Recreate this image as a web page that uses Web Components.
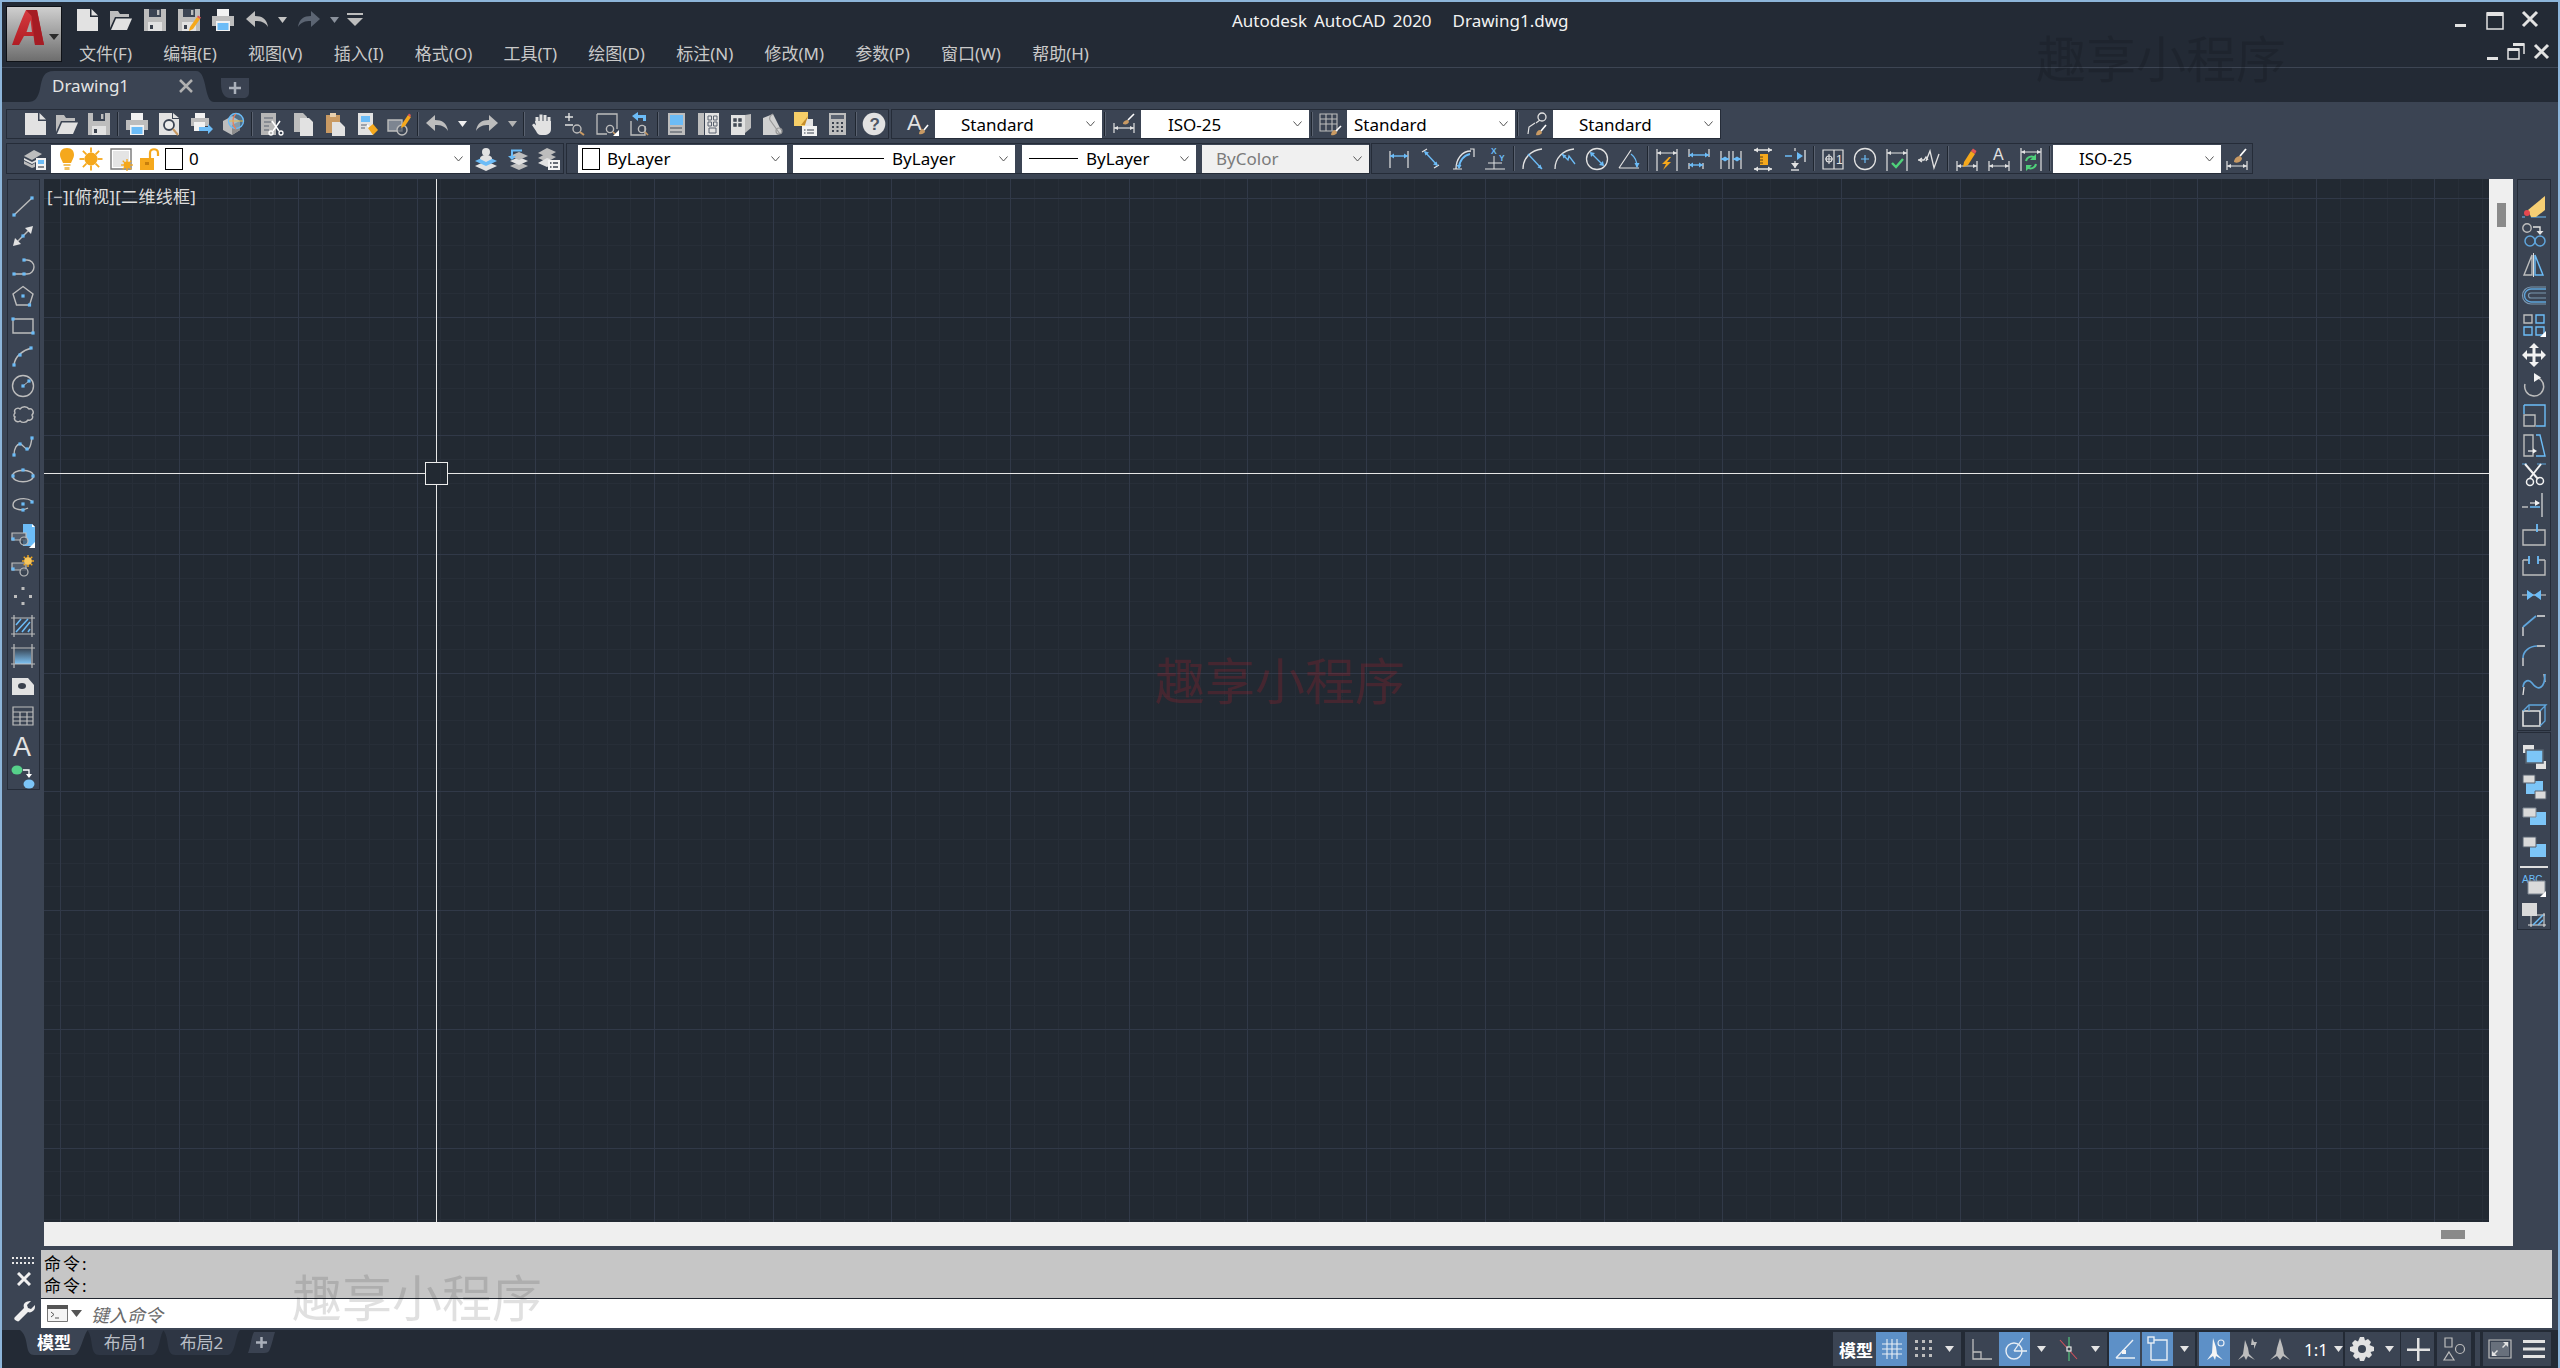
<!DOCTYPE html>
<html lang="zh">
<head>
<meta charset="utf-8">
<title>Autodesk AutoCAD 2020</title>
<style>
  html, body { margin: 0; height: 100%; overflow: hidden; background: #232a35; }
</style>
</head>
<body>
<cad-app>
  <cad-titlebar slot="title">
    <cad-icon slot="qat" name="new" w="34"></cad-icon>
    <cad-icon slot="qat" name="open" w="34"></cad-icon>
    <cad-icon slot="qat" name="save" w="34"></cad-icon>
    <cad-icon slot="qat" name="saveas" w="34"></cad-icon>
    <cad-icon slot="qat" name="print" w="34"></cad-icon>
    <cad-icon slot="qat" name="undo" w="34"></cad-icon>
    <cad-dd slot="qat" w="16" color="#c4c4c4"></cad-dd>
    <cad-icon slot="qat" name="redodim" w="34" style="margin-left:2px"></cad-icon>
    <cad-dd slot="qat" w="16" color="#8a919c"></cad-dd>
    <cad-icon slot="qat" name="custom" w="26"></cad-icon>
    <cad-menu-item slot="menu">文件(F)</cad-menu-item>
    <cad-menu-item slot="menu">编辑(E)</cad-menu-item>
    <cad-menu-item slot="menu">视图(V)</cad-menu-item>
    <cad-menu-item slot="menu">插入(I)</cad-menu-item>
    <cad-menu-item slot="menu">格式(O)</cad-menu-item>
    <cad-menu-item slot="menu">工具(T)</cad-menu-item>
    <cad-menu-item slot="menu">绘图(D)</cad-menu-item>
    <cad-menu-item slot="menu">标注(N)</cad-menu-item>
    <cad-menu-item slot="menu">修改(M)</cad-menu-item>
    <cad-menu-item slot="menu">参数(P)</cad-menu-item>
    <cad-menu-item slot="menu">窗口(W)</cad-menu-item>
    <cad-menu-item slot="menu">帮助(H)</cad-menu-item>
  </cad-titlebar>

  <cad-tabbar slot="tabs"></cad-tabbar>

  <cad-ribbon slot="ribbon">
    <cad-row>
      <cad-group style="width:883px;padding-left:12px">
        <cad-icon name="new"></cad-icon><cad-icon name="open"></cad-icon><cad-icon name="save"></cad-icon>
        <cad-sep></cad-sep>
        <cad-icon name="print"></cad-icon><cad-icon name="preview"></cad-icon><cad-icon name="publish"></cad-icon><cad-icon name="cube"></cad-icon>
        <cad-sep></cad-sep>
        <cad-icon name="cut"></cad-icon><cad-icon name="copydoc"></cad-icon><cad-icon name="paste"></cad-icon><cad-icon name="match"></cad-icon><cad-icon name="blockedit"></cad-icon>
        <cad-sep></cad-sep>
        <cad-icon name="undo"></cad-icon><cad-dd w="18"></cad-dd><cad-icon name="redo"></cad-icon><cad-dd w="18" color="#b4b4b4"></cad-dd>
        <cad-sep></cad-sep>
        <cad-icon name="pan"></cad-icon><cad-icon name="zoomrt"></cad-icon><cad-icon name="zoomwin"></cad-icon><cad-icon name="zoomprev"></cad-icon>
        <cad-sep></cad-sep>
        <cad-icon name="props"></cad-icon><cad-icon name="center"></cad-icon><cad-icon name="palette"></cad-icon><cad-icon name="sheets"></cad-icon><cad-icon name="markup"></cad-icon><cad-icon name="calc"></cad-icon>
        <cad-sep></cad-sep>
        <cad-icon name="help" w="30"></cad-icon>
      </cad-group>
      <cad-group style="width:830px;margin-left:2px;padding-left:7px">
        <cad-icon name="textstyle" w="36"></cad-icon>
        <cad-combo w="167" pad="26">Standard</cad-combo>
        <cad-sep style="margin:0 1px 0 2px"></cad-sep>
        <cad-icon name="dimstyle" w="34"></cad-icon>
        <cad-combo w="168" pad="27">ISO-25</cad-combo>
        <cad-sep></cad-sep>
        <cad-icon name="tablestyle"></cad-icon>
        <cad-combo w="168" pad="7">Standard</cad-combo>
        <cad-sep></cad-sep>
        <cad-icon name="mleaderstyle"></cad-icon>
        <cad-combo w="167" pad="26">Standard</cad-combo>
      </cad-group>
    </cad-row>
    <cad-row>
      <cad-group style="width:558px;padding-left:11px">
        <cad-icon name="layerprops" w="33"></cad-icon>
        <cad-combo w="419" pad="4" tall>
          <cad-icon name="bulb" w="24"></cad-icon>
          <cad-icon name="sun" w="24"></cad-icon>
          <cad-icon name="freezevp" w="34" style="margin-left:1px"></cad-icon>
          <cad-icon name="lock" w="22"></cad-icon>
          <cad-swatch style="margin-left:5px"></cad-swatch>
          <span style="margin-left:6px">0</span>
        </cad-combo>
        <cad-icon name="layercur"></cad-icon><cad-icon name="layerprev" w="31"></cad-icon><cad-icon name="layerstate"></cad-icon>
      </cad-group>
      <cad-group style="width:804px;margin-left:2px;padding-left:11px">
        <cad-combo w="209" pad="7" tall><cad-swatch style="margin-left:-3px;margin-right:7px"></cad-swatch>ByLayer</cad-combo>
        <cad-combo w="222" pad="7" tall style="margin-left:6px"><cad-rule w="84"></cad-rule>ByLayer</cad-combo>
        <cad-combo w="174" pad="7" tall style="margin-left:7px"><cad-rule w="49"></cad-rule>ByLayer</cad-combo>
        <cad-combo w="167" pad="14" tall off style="margin-left:6px">ByColor</cad-combo>
      </cad-group>
      <cad-group style="width:882px;margin-left:1px;padding-left:11px">
        <cad-icon name="dimlinear"></cad-icon><cad-icon name="dimaligned"></cad-icon><cad-icon name="dimarc"></cad-icon><cad-icon name="dimord"></cad-icon>
        <cad-sep></cad-sep>
        <cad-icon name="dimradius"></cad-icon><cad-icon name="dimjog"></cad-icon><cad-icon name="dimdia"></cad-icon><cad-icon name="dimang"></cad-icon>
        <cad-sep></cad-sep>
        <cad-icon name="qdim"></cad-icon><cad-icon name="dimbase"></cad-icon><cad-icon name="dimcont"></cad-icon><cad-icon name="dimspace"></cad-icon><cad-icon name="dimbreak"></cad-icon>
        <cad-sep></cad-sep>
        <cad-icon name="tolerance"></cad-icon><cad-icon name="centermark"></cad-icon><cad-icon name="inspect"></cad-icon><cad-icon name="jogline"></cad-icon>
        <cad-sep></cad-sep>
        <cad-icon name="dimedit"></cad-icon><cad-icon name="dimtedit"></cad-icon><cad-icon name="dimupdate"></cad-icon>
        <cad-sep></cad-sep>
        <cad-combo w="168" pad="26" tall>ISO-25</cad-combo>
        <cad-icon name="dimbrush"></cad-icon>
      </cad-group>
    </cad-row>
  </cad-ribbon>

  <cad-side slot="left" side="left">
    <cad-group vertical style="width:33px;height:611px;padding-top:11px;padding-right:1px">
      <cad-icon h="30" w="30" name="line"></cad-icon><cad-icon h="30" w="30" name="xline"></cad-icon><cad-icon h="30" w="30" name="pline"></cad-icon><cad-icon h="30" w="30" name="polygon"></cad-icon><cad-icon h="30" w="30" name="rect"></cad-icon>
      <cad-icon h="30" w="30" name="arc"></cad-icon><cad-icon h="30" w="30" name="circle"></cad-icon><cad-icon h="30" w="30" name="cloud"></cad-icon><cad-icon h="30" w="30" name="spline"></cad-icon><cad-icon h="30" w="30" name="ellipse"></cad-icon>
      <cad-icon h="30" w="30" name="ellarc"></cad-icon><cad-icon h="30" w="30" name="insert"></cad-icon><cad-icon h="30" w="30" name="mkblock"></cad-icon><cad-icon h="30" w="30" name="point"></cad-icon><cad-icon h="30" w="30" name="hatch"></cad-icon>
      <cad-icon h="30" w="30" name="gradient"></cad-icon><cad-icon h="30" w="30" name="region"></cad-icon><cad-icon h="30" w="30" name="table"></cad-icon><cad-icon h="30" w="30" name="mtext"></cad-icon><cad-icon h="30" w="30" name="addsel"></cad-icon>
    </cad-group>
  </cad-side>

  <cad-viewport slot="view">[−][俯视][二维线框]</cad-viewport>

  <cad-side slot="right" side="right">
    <cad-group vertical style="width:34px;height:552px;padding-top:10px">
      <cad-icon h="30" w="32" name="erase"></cad-icon><cad-icon h="30" w="32" name="copyobj"></cad-icon><cad-icon h="30" w="32" name="mirror"></cad-icon><cad-icon h="30" w="32" name="offset"></cad-icon><cad-icon h="30" w="32" name="array"></cad-icon><cad-icon h="30" w="32" name="move"></cad-icon>
      <cad-icon h="30" w="32" name="rotate"></cad-icon><cad-icon h="30" w="32" name="scale"></cad-icon><cad-icon h="30" w="32" name="stretch"></cad-icon><cad-icon h="30" w="32" name="trim"></cad-icon><cad-icon h="30" w="32" name="extend"></cad-icon><cad-icon h="30" w="32" name="breakpt"></cad-icon>
      <cad-icon h="30" w="32" name="breakobj"></cad-icon><cad-icon h="30" w="32" name="join"></cad-icon><cad-icon h="30" w="32" name="chamfer"></cad-icon><cad-icon h="30" w="32" name="fillet"></cad-icon><cad-icon h="30" w="32" name="blend"></cad-icon><cad-icon h="30" w="32" name="explode"></cad-icon>
    </cad-group>
    <cad-group vertical style="width:34px;height:198px;margin-top:1px;padding-top:9px">
      <cad-icon h="30" w="32" name="ordfront"></cad-icon><cad-icon h="30" w="32" name="ordback"></cad-icon><cad-icon h="30" w="32" name="ordabove"></cad-icon><cad-icon h="30" w="32" name="ordunder"></cad-icon>
      <cad-sep flat></cad-sep>
      <cad-icon h="30" w="32" name="textfront"></cad-icon><cad-icon h="30" w="32" name="hatchback"></cad-icon>
    </cad-group>
  </cad-side>

  <cad-command slot="command">
    <span slot="history">命令:</span>
    <span slot="history">命令:</span>
    <span slot="prompt">键入命令</span>
  </cad-command>

  <cad-statusbar slot="status">
    <cad-layout-tab slot="tabs" active>模型</cad-layout-tab>
    <cad-layout-tab slot="tabs">布局1</cad-layout-tab>
    <cad-layout-tab slot="tabs">布局2</cad-layout-tab>

    <cad-group plain slot="tools" style="width:128px;padding-left:6px">
      <cad-label bold>模型</cad-label>
      <cad-icon name="grid" w="31" on style="margin-left:3px"></cad-icon>
      <cad-icon name="snap"></cad-icon>
      <cad-dd w="21" color="#e4e4e4"></cad-dd>
    </cad-group>
    <cad-group plain slot="tools" style="width:142px;margin-left:4px">
      <cad-icon name="ortho" w="34"></cad-icon>
      <cad-icon name="polar" w="31" on></cad-icon>
      <cad-dd w="22" color="#e4e4e4"></cad-dd>
      <cad-icon name="iso" w="33"></cad-icon>
      <cad-dd w="21" color="#e4e4e4"></cad-dd>
    </cad-group>
    <cad-group plain slot="tools" style="width:86px;margin-left:2px">
      <cad-icon name="otrack" w="31" on></cad-icon>
      <cad-icon name="osnap" w="31" on style="margin-left:2px"></cad-icon>
      <cad-dd w="22" color="#e4e4e4"></cad-dd>
    </cad-group>
    <cad-group plain slot="tools" style="width:146px;margin-left:2px;padding-left:2px">
      <cad-icon name="anno1" w="31" on></cad-icon>
      <cad-icon name="anno2" w="34"></cad-icon>
      <cad-icon name="anno3" w="32"></cad-icon>
      <cad-label style="margin-left:8px">1:1</cad-label>
      <cad-dd w="21" color="#e4e4e4"></cad-dd>
    </cad-group>
    <cad-group plain slot="tools" style="width:55px;margin-left:2px">
      <cad-icon name="gear" w="34"></cad-icon>
      <cad-dd w="20" color="#e4e4e4"></cad-dd>
    </cad-group>
    <cad-group plain slot="tools" style="width:33px;margin-left:1px">
      <cad-icon name="plus" w="33"></cad-icon>
    </cad-group>
    <cad-group plain slot="tools" style="width:34px;margin-left:3px">
      <cad-icon name="isolate" w="34"></cad-icon>
    </cad-group>
    <cad-group plain slot="tools" style="width:5px;margin-left:4px"></cad-group>
    <cad-group plain slot="tools" style="width:68px;margin-left:3px">
      <cad-icon name="fullscreen" w="34"></cad-icon>
      <cad-icon name="hamburger" w="34"></cad-icon>
    </cad-group>
  </cad-statusbar>

  <cad-watermark slot="marks" style="left:2036px;top:26px;color:rgba(0,0,0,.13)">趣享小程序</cad-watermark>
  <cad-watermark slot="marks" style="left:1155px;top:648px;color:rgba(210,30,40,.2)">趣享小程序</cad-watermark>
  <cad-watermark slot="marks" style="left:292px;top:1265px;color:rgba(0,0,0,.12)">趣享小程序</cad-watermark>
</cad-app>

<script>
const LT = "#e2e2e2", GR = "#bdbdbd", BL = "#6cbcf7", BG = "#3b4453", OR = "#f5a81c", TN = "#c99a63", SOFT = "#5fa5dc";

const s = (d, c = GR, w = 1.4) => `<path d="${d}" fill="none" stroke="${c}" stroke-width="${w}"/>`;
const f = (d, c = LT) => `<path d="${d}" fill="${c}"/>`;
const h = (x, y) => `<rect x="${x - 1.6}" y="${y - 1.6}" width="3.2" height="3.2" fill="${BL}"/>`;
const circ = (x, y, r, c = GR, w = 1.4, fill = "none") => `<circle cx="${x}" cy="${y}" r="${r}" fill="${fill}" stroke="${c}" stroke-width="${w}"/>`;
const txt = (x, y, t, size, c = LT, weight = 400) => `<text x="${x}" y="${y}" font-family="Liberation Sans, sans-serif" font-size="${size}" font-weight="${weight}" fill="${c}">${t}</text>`;
const flip = (g) => `<g transform="matrix(-1 0 0 1 24 0)">${g}</g>`;
const corner = f("M24 24h-6l6-6z", "#fff");
const arrowsH = (y, x1 = 3, x2 = 21) => s(`M${x1} ${y}H${x2}`, BL) + f(`M${x1} ${y}l4-2.5v5z`, BL) + f(`M${x2} ${y}l-4-2.5v5z`, BL);
const brush = f("M14 22c0-3 2-5 4-5l2 2c0 2-3 4-6 3z", TN) + s("M19 18l4-5", "#fff", 1.6);
const floppy = f("M1 1h22v22H1z", GR) + f("M6 1h12v8H6z", BG) + f("M14 2h2.4v5H14z", GR) + f("M5 14h14v9H5z", LT) + f("M7 17h3v4H7z", "#39404c");
const printer = f("M6 1h12v7H6z", "#f2f2f2") + f("M1 8h22v10H1z", GR) + f("M5 13h14v10H5z", "#f2f2f2") + f("M6.5 15h11v7h-11z", BL);
const undoShape = (c) => f("M1 11l9-8v5c7 0 12 3 13 11-3-5-7-6-13-6v6z", c);

const ICONS = {
  new: f("M2 1h13v8h8v14H2z") + f("M16.5 1l6.5 6.5h-6.5z"),
  open: f("M1 3h8l2 3h9v3H6l-5 11z", GR) + f("M7 10.5h16L18 22H2z"),
  save: floppy,
  saveas: floppy + f("M13 19l7-10 3 2-7 10-4 2z", OR) + f("M20 9l1-1.500 3 2-1 1.500z", "#e25555"),
  print: printer,
  undo: undoShape(GR),
  redo: flip(undoShape(GR)),
  redodim: flip(undoShape("#5c6573")),
  custom: f("M4 5h16v2H4z", GR) + f("M4 10h16l-8 8z", GR),
  preview: f("M2 1h13v6h7v16H2z") + f("M16 1l6 5h-6z") + circ(12, 13, 5, "#3b4453", 1.800, "rgba(255,255,255,.3)") + s("M16 17l5 6", TN, 2),
  publish: f("M6 1h10v5H6z", "#f2f2f2") + f("M2 6h18v8H2z", GR) + f("M5 10h11v9H5z", "#f2f2f2") + f("M10 15h9v-3l5 5-5 5v-3h-9z", BL),
  cube: f("M2 9l9-5 8 5v9l-8 5-9-5z", GR) + f("M11 13l8-4v9l-8 5z", "#8c8c8c") + circ(15, 9, 7.5, BL, 1.4, "rgba(120,190,230,.35)") + s("M15 2c-4 3-4 11 0 15", "#e97f5d", 1.2) + s("M8 9h14", "#e7b94a", 1),
  cut: f("M2 1h15v22H2z", "#b6b6b6") + s("M5 6h9M5 10h7M5 14h5M5 18h5", "#5a6270", 1.2) + s("M13 9l7 10M21 9l-7 10", "#fff", 1.5) + circ(12, 21, 2, "#fff", 1.3) + circ(22, 21, 2, "#fff", 1.3),
  copydoc: f("M3 1h9l4 4v15H3z", GR) + f("M9 6h9l4 4v14H9z"),
  paste: f("M3 3h14v18H3z", TN) + f("M7 1h6v4H7z", "#e8d0ae") + f("M9 10h8l5 5v9H9z"),
  match: f("M3 1h15v22H3z", LT) + f("M6 4h9v6H6z", BL) + s("M6 13h6M6 16h4", "#5a6270", 1.2) + f("M13 16l5-4 5 6-5 5z", OR) + s("M14 15l-2-2", "#fff", 1.6),
  blockedit: f("M1 8h14v11H1z", "#7d8591") + s("M1 8h14v11H1z", GR) + circ(15, 18, 5, GR, 1.4, "rgba(59,68,83,.6)") + f("M15 12l6-9 3 2-6 9-4 2z", OR) + f("M21 3l1-1.500 2 1.500-1 2z", "#e25555"),
  pan: s("M6 11v-6M10 10V2.500M14 10V3M18 11V5", LT, 3) + f("M4 9h16v8c0 4-3 6-7 6H10c-3 0-4-2-5-4l-4-6 2-1.500 2 2z"),
  zoomrt: s("M6 1v8M2 5h8M2 13h8", LT, 1.4) + circ(14, 17, 4, GR, 1.4) + s("M17 20l4 3", TN, 2),
  zoomwin: s("M2 2h20v15M2 2v20h10", GR, 1.300) + circ(15, 17, 3.600, GR, 1.4) + s("M18 20l3 3", TN, 1.600) + corner,
  zoomprev: s("M4 9v14h14V14", GR, 1.4) + f("M5 4l6-4v3h8v6h-3V6h-5v3z", BL) + circ(15, 17, 3.600, GR, 1.4) + s("M18 20l3 3", TN, 1.600),
  props: f("M3 1h17v22H3z", GR) + f("M5 3h13v10H5z", BL) + s("M5 16h12M5 20h12", "#444c58", 1.2),
  center: f("M1 1h6v22H1z", GR) + f("M8 1h14v22H8z", LT) + s("M11 4h3.500v4H11zM16.500 4H20v4h-3.500zM11 10h3.500v4H11zM16.500 10H20v4h-3.500zM12 16h7v5h-7z", "#5a6270", 1),
  palette: f("M2 3h14v20H2z") + f("M16 3l6-1v14l-6 5z", GR) + s("M5 7h2v2H5zM10 7h2v2h-2zM5 12h2v2H5zM10 12h2v2h-2z", "#39404c", 1.4),
  sheets: f("M2 23V6l10-4 9 18c-2 2-4 3-6 3z", "#d0d0d0") + s("M12 2c-3 1-4 4-3 6l10 14", "#9a9a9a", 1.2) + circ(18, 19, 3, "#9a9a9a", 1.2),
  markup: f("M1 0h14v14H1z", "#f7cf68") + f("M12 7h8v8h-8z", LT) + f("M15 4l-3 9h-4z", "#c68e2a") + f("M9 14h15v10H9z", "#f2f2f2") + s("M11 18h1.500M14 18h7M11 21h1.500M14 21h7", "#39404c", 1.2),
  calc: f("M4 1h17v22H4z", GR) + f("M6 3h13v4H6z", "#5a6270") + s("M7 11h2M11.500 11h2M16 11h2M7 15h2M11.500 15h2M16 15h2M7 19h2M11.500 19h2M16 19h2", "#39404c", 2.2),
  help: circ(12, 12, 11.300, LT, 0, LT) + txt(7.500, 18, "?", 17, "#4e5664", 700),
  textstyle: txt(2, 18, "A", 22, LT) + brush,
  dimstyle: s("M2 11v10M22 11v10", LT, 1.2) + s("M2 16H22", LT, 1.2) + f("M2 16l4-2v4zM22 16l-4-2v4z") + f("M11 12c0-3 3-4 5-4l1 2c-1 2-3 3-6 2z", TN) + s("M16 8l6-6", "#fff", 1.600),
  tablestyle: s("M1 2h17v17H1zM1 7h17M1 12h17M7 2v17M13 2v17", GR, 1.100) + f("M12 23c0-3 2-5 4-5l2 2c0 2-3 4-6 3z", TN) + s("M17 19l5-5", "#fff", 1.600),
  mleaderstyle: s("M3 22l1-7 6-4", LT, 1.200) + circ(17, 5, 4, LT, 1.300) + s("M11 11l4-3", LT, 1.200) + f("M11 23c0-3 2-5 4-5l2 2c0 2-3 4-6 3z", TN) + s("M16 19l5-6", "#fff", 1.600),
  layerprops: f("M1 9l10-6 8 4-10 6z", GR) + f("M1 14l8 4 3-2v4l-3 1-8-4z", GR) + f("M1 11l8 4 4-2v2l-4 2-8-4z", LT) + f("M13 11h10v12H13z", "#f2f2f2") + f("M15 13h6v4h-6z", BL) + s("M15 20h6", "#39404c", 1.200),
  bulb: f("M12 1c5 0 7 3 7 7 0 3-2 5-3 8H8C7 13 5 11 5 8c0-4 2-7 7-7z", OR) + f("M8.500 17h7v2h-7zM9.500 20h5v3h-5z", "#f0c060"),
  sun: Array.from({ length: 8 }, (_, i) => `<path d="M12 0.500v5" stroke="${OR}" stroke-width="1.800" transform="rotate(${i * 45} 12 12)"/>`).join("") + circ(12, 12, 6.500, OR, 0, OR),
  freezevp: s("M2 2h20v20H2z", "#777", 1.400) + f("M4 4h16v16H4z", "#e4e4e4") + Array.from({ length: 8 }, (_, i) => `<path d="M18 12v3" stroke="${OR}" stroke-width="1.300" transform="rotate(${i * 45} 18 18)"/>`).join("") + circ(18, 18, 3.400, OR, 0, OR),
  lock: f("M3 11h14v12H3z", OR) + s("M13 11V6c0-5 8-5 8 0v3", OR, 2.200) + f("M8 15h4v3H8z", "#c77f0c"),
  layercur: f("M1 19l11-5 11 5-11 5z") + f("M1 14l11-5 11 5-11 5z", BL) + circ(12, 5, 4, LT, 0, LT) + f("M6 12c0-3 3-4 6-4s6 1 6 4l-6 3z"),
  layerprev: f("M4 19l9-4 9 4-9 4z", GR) + f("M4 14l9-4 9 4-9 4z", LT) + f("M4 9l9-4 9 4-9 4z", GR) + s("M6 9V3.500h10", BL, 2) + f("M2 9h8l-4 4z", BL),
  layerstate: f("M1 11l9-5 9 4-9 5z", GR) + f("M1 6l9-5 9 4-9 5z", GR) + f("M1 16l9-5 3 1-1 7-2 1z", LT) + f("M11 13h12v10H11z", "#f2f2f2") + s("M13 16h1.500M16 16h5M13 20h1.500M16 20h5", "#39404c", 1.400),
  dimlinear: s("M3 4v17M21 4v17", LT, 1.200) + arrowsH(9),
  dimaligned: s("M3 5l5-3M15 21l5-3", LT, 1.200) + s("M6 5l12 13", BL, 1.400) + f("M5 4l5 1.500-3.500 3zM19 19l-5-1.500 3.500-3z", BL),
  dimarc: s("M2 22h9M19 2h4v8", LT, 1.200) + s("M5 22C5 12 11 4 20 4", LT, 1.300) + s("M8 21C8 14 13 8 19 7", BL, 2) + f("M8 22l-2.500-4h5z", BL),
  dimord: s("M2 22h20M11 9v13M5 16h14", LT, 1) + txt(8, 7, "X", 8.500, BL, 700) + txt(16, 14, "Y", 8.500, BL, 700) + s("M11 16h.1", BL, 2),
  dimradius: s("M2 22C2 11 10 3 21 2", LT, 1.300) + s("M7 7l14 15", BL, 1.300) + f("M21 22l-4.500-1.500 3-3z", BL),
  dimjog: s("M2 22C2 11 10 3 21 2", LT, 1.300) + s("M9 7l6 6 1-4 6 8", BL, 1.300) + f("M9 7l4.500 1.500-3 3z", BL),
  dimdia: circ(12, 12, 10.500, LT, 1.300) + s("M6 6l12 12", BL, 1.300) + f("M5 5l5 1-4 4zM19 19l-5-1 4-4z", BL),
  dimang: s("M2 21h20M2 21L14 3", LT, 1.200) + s("M14 7c4 3 6 8 6 13", BL, 1.300) + f("M20 21l-2.500-5h5z", BL),
  qdim: s("M2 2v22M22 2v22M2 6h20", LT, 1.200) + f("M2 6l4-2v4zM22 6l-4-2v4z") + f("M14 10l-7 7h4l-3 6 8-8h-4l4-5z", OR),
  dimbase: s("M2 2v8M2 16v6M22 2v8M16 16v6", LT, 1.200) + arrowsH(8, 2, 22) + arrowsH(18, 2, 16),
  dimcont: s("M2 4v18M10 4v18M14 4v18M22 4v18", LT, 1.200) + arrowsH(12, 2, 10) + arrowsH(12, 14, 22),
  dimspace: s("M3 3h18M3 22h18", LT, 1.400) + f("M3 3l4-2.500v5zM21 3l-4-2.500v5zM3 22l4-2.500v5zM21 22l-4-2.500v5z") + f("M9 7h8v11H9z", OR) + s("M9 10h3M9 13h3M9 16h3", "#5a3e10", 1),
  dimbreak: s("M2 9h7M16 9h1", BL, 1.300) + s("M22 3v12", LT, 1.300) + f("M20 9l-6-4v8z", BL) + s("M12 1v3M12 14v7", LT, 1.200) + f("M8 16h8l-4 5z") + s("M8 23h8", LT, 1.400),
  tolerance: s("M2 3h20v19H2zM13 3v19", LT, 1.200) + circ(8, 12, 3, LT, 1.100) + s("M8 7v10M4 12h8", LT, 1.100) + txt(15, 17, "1", 12, LT),
  centermark: circ(12, 12, 10.500, LT, 1.300) + s("M12 8v8M8 12h8", BL, 1.200),
  inspect: s("M2 2v22M22 2v22M2 6h20", LT, 1.200) + f("M2 6l4-2v4zM22 6l-4-2v4z") + s("M7 16l4 4 7-8", "#4fd17a", 2.400),
  jogline: s("M1 13h6l2-3 2 3M2 13l3-2M2 13l3 2", LT, 1.300) + s("M9 14l4-10 4 17 5-14", LT, 1.300),
  dimedit: s("M2 14v10M22 14v10M2 19h20", LT, 1.200) + f("M2 19l4-2v4zM22 19l-4-2v4z") + f("M9 15l7-11 4 3-7 11-5 2z", OR) + f("M16 4l2-2.500 3.500 2.500-1.500 3z", "#e25555"),
  dimtedit: txt(6, 13, "A", 16, LT, 400) + s("M2 14v10M22 14v10M2 19h20", LT, 1.200) + f("M2 19l4-2v4zM22 19l-4-2v4z"),
  dimupdate: s("M2 1v23M22 1v23M2 5h20", LT, 1.200) + f("M2 5l4-2v4zM22 5l-4-2v4z") + s("M7 14a5.500 5.500 0 0 1 9-3M17 17a5.500 5.500 0 0 1-9 3", "#4fd17a", 2) + f("M17 7v6h-6zM7 24v-6h6z", "#4fd17a"),
  dimbrush: s("M2 14v9M22 14v9M2 19h20", LT, 1.200) + f("M2 19l4-2v4zM22 19l-4-2v4z") + f("M9 15c0-4 4-6 6-6l2 2c0 3-4 6-8 4z", TN) + s("M15 9l6-7", "#fff", 1.800),

  line: s("M3 21L21 4") + h(3, 21) + h(21, 4),
  xline: s("M5 19L19 5") + f("M2 22l2-8 6 6z") + f("M22 2l-8 2 6 6z") + h(12, 12),
  pline: s("M3 20h13a7 7 0 0 0 0-14h-4") + h(3, 20) + h(13, 20) + h(13, 6),
  polygon: s("M12 2.500l10 7.500-3.500 11h-13L2 10z") + h(12, 12) + h(18.500, 21),
  rect: s("M2 5h20v14H2z") + h(2, 5) + h(22, 19),
  arc: s("M3 21C4 12 12 6 21 4") + h(3, 21) + h(9, 11) + h(20, 4),
  circle: circ(12, 12, 10.500) + s("M12 12l6-5", GR, 1) + h(12, 12) + h(18, 7),
  cloud: s("M4 9c-2-4 3-6 5-4 2-3 7-3 9 0 3-1 6 3 3 6 2 3-1 6-4 5-2 3-6 3-8 1-3 2-7-1-5-4-2-1-1-3 0-4z"),
  spline: s("M3 21c0-7 3-11 6-11s5 6 8 5 3-7 4-11") + h(3, 21) + h(9, 10) + h(16, 15) + h(21, 4),
  ellipse: `<ellipse cx="12" cy="12" rx="10.500" ry="5.800" fill="none" stroke="${GR}" stroke-width="1.400"/>` + h(2, 12) + h(12, 6) + h(22, 12),
  ellarc: s("M21 7C15 3 2 4 2 11c0 5 10 6 15 3") + h(12, 10) + h(12, 16) + h(21, 8),
  insert: f("M12 0h9l3 3v19H12z", BL) + f("M21 0l3 3h-3z", "#fff") + f("M1 9h14v7H1z", "#555e6c") + s("M1 9h14v7H1z", GR, 1.200) + circ(13, 17, 4, GR, 1.200, "rgba(59,68,83,.7)") + corner + h(2, 15),
  mkblock: f("M1 9h14v7H1z", "#555e6c") + s("M1 9h14v7H1z", GR, 1.200) + circ(13, 18, 4, GR, 1.200, "rgba(59,68,83,.7)") + Array.from({ length: 8 }, (_, i) => `<path d="M17 1v3" stroke="${OR}" stroke-width="1.400" transform="rotate(${i * 45} 17 7)"/>`).join("") + circ(17, 7, 3.800, "#f6c65c", 0, "#f6c65c") + h(2, 15),
  point: f("M10.500 3h3v3h-3zM3 11h3v3H3zM18 11h3v3h-3zM10.500 18h3v3h-3z", GR),
  hatch: s("M3 1v22M21 1v22M0 4h24M0 20h24", GR, 1.200) + s("M5 11l5-6M5 18l12-13M11 18l8-10M17 18l2-3", BL, 1.500),
  gradient: `<defs><linearGradient id="gr" x1="0" y1="0" x2="0" y2="1"><stop offset="0" stop-color="#35404e"/><stop offset="1" stop-color="#7fc4f5"/></linearGradient></defs>` + f("M4 4h16v16H4z", "url(#gr)") + s("M3 0v24M21 0v24M0 4h24M0 20h24", GR, 1.200),
  region: f("M1 4h16l6 7v10H1z") + `<ellipse cx="11" cy="12" rx="4" ry="3" fill="#39404c"/>`,
  table: s("M2 3h20v18H2zM2 8h20M2 13h20M2 17h20M9 8v13M16 8v13", GR, 1.200),
  mtext: txt(2, 22, "A", 27, LT),
  addsel: `<ellipse cx="6" cy="6" rx="5.500" ry="4.500" fill="#56d18a"/><ellipse cx="18" cy="20" rx="5.500" ry="4.500" fill="#7cc5f7"/>` + s("M12 6h6v6", "#fff", 1.300) + f("M15 10h6l-3 4z", "#fff"),

  erase: s("M0 24h3M9 24h15", BL, 1.100) + f("M6 17L23 3v14L14 24H9z", "#f6cf74") + circ(5, 20, 3, "#e6484f", 0, "#e6484f"),
  copyobj: circ(5, 5, 4.200, GR) + s("M11 4h7v4", LT, 1.400) + f("M14.500 8h7l-3.500 4z") + circ(8, 18, 5, SOFT, 1.500) + circ(18, 18, 5, SOFT, 1.500),
  mirror: s("M10 2L2 22h8z", GR) + s("M13 2l8 20h-8z", BL) + s("M11.500 0v24", "#dcdcdc", 1),
  offset: s("M24 6H9a6 6 0 0 0 0 13h15", SOFT, 1.400) + s("M24 10H9a2.500 2.500 0 0 0 0 5h15M24 4H9a8.500 8.500 0 0 0 0 17h15", "#7b97b0", 1.200),
  array: s("M2 2h8v8H2z", GR) + s("M14 2h8v8h-8zM2 14h8v8H2zM14 14h8v8h-8z", BL) + corner,
  move: f("M12 0l5 5h-3.500v5.500H19V7l5 5-5 5v-3.500h-5.500V19H17l-5 5-5-5h3.500v-5.500H5V17l-5-5 5-5v3.500h5.500V5H7z", "#f2f2f2"),
  rotate: s("M12 4a9.500 9.500 0 1 1-9 7", GR, 1.500) + f("M12 0l7 4.500-7 4.500z", "#f2f2f2"),
  scale: s("M2 2h21v21h-9M2 2v9", BL, 1.400) + s("M2 12h11v11H2z", GR, 1.400),
  stretch: s("M2 2h9v21H2z", GR, 1.400) + s("M14 2h4l5 21h-9", BL, 1.400) + s("M6 18h7", "#f2f2f2", 1.200) + f("M15 18l-4-2.500v5z", "#f2f2f2"),
  trim: s("M0 1h5M15 1h9", SOFT, 1.200) + s("M3 1l13 15M19 1L8 15", "#f2f2f2", 2) + circ(8, 19, 3.500, "#f2f2f2", 1.500) + circ(18, 18, 3.500, "#f2f2f2", 1.500),
  extend: s("M20 0v24", LT, 1.200) + s("M0 14h6", GR, 1.500) + s("M8 14h10", BL, 1.500) + s("M8 10h9", LT, 1.200) + f("M18 10l-5-3v6z", "#f2f2f2"),
  breakpt: s("M1 7h22v15H1z", GR, 1.400) + s("M15 1v8", BL, 1.800),
  breakobj: s("M1 7v15h22V7M1 7h7M16 7h7", GR, 1.400) + s("M7 3v8M16 3v8", BL, 1.800),
  join: s("M0 12h24", GR, 1.200) + f("M5 7l7 5-7 5zM19 7l-7 5 7 5z", BL),
  chamfer: s("M1 23v-9M15 3h8", LT, 1.300) + s("M1 14L14 3", SOFT, 1.700),
  fillet: s("M1 23v-8M15 3h8", LT, 1.300) + s("M1 15C1 8 8 3 15 3", SOFT, 1.700),
  blend: s("M1 22l1-8M22 1l1 8", LT, 1.300) + s("M1 14c1-7 6-8 9-4s6 6 9 4 4-8 4-13", SOFT, 1.700),
  explode: s("M1 8h17v15H1z", LT, 1.600) + s("M1 8l6-6h17l-6 6M18 23l5-5V2", SOFT, 1.300) + s("M7 2v6", SOFT, 1.200),
  ordfront: f("M1 0h11v8H1z") + f("M14 16h10v8H14z") + `<path d="M4 5h17v13H4z" fill="#7cc5f7" stroke="#56606e" stroke-width="1.500"/>`,
  ordback: f("M4 6h17v13H4z", "#7cc5f7") + `<path d="M1 0h12v8H1zM13 16h11v8H13z" fill="#dadada" stroke="#56606e" stroke-width="1"/>`,
  ordabove: f("M8 7h16v13H8z", "#7cc5f7") + `<path d="M1 3h13v9H1z" fill="#dadada" stroke="#7f8793" stroke-width="1"/>`,
  ordunder: f("M8 9h16v13H8z", "#7cc5f7") + `<path d="M1 2h13v10H1z" fill="#dadada" stroke="#56606e" stroke-width="1"/>`,
  textfront: txt(0, 10, "ABC", 10, BL, 400) + `<path d="M6 8h17v13H6z" fill="#dadada" stroke="#7f8793" stroke-width="1"/>` + corner,
  hatchback: s("M9 10v14M22 10v14M6 22h18M9 12h14", LT, 1) + s("M11 22l10-10M16 22l5-5", BL, 1.500) + `<path d="M0 0h15v13H0z" fill="#dadada"/>`,

  grid: s("M7 2v20M12 2v20M17 2v20M2 7h20M2 12h20M2 17h20", "#e8eef5", 1.100),
  snap: f("M4 3h3v3H4zM11 3h3v3h-3zM18 3h3v3h-3zM4 10h3v3H4zM11 10h3v3h-3zM18 10h3v3h-3zM4 17h3v3H4zM11 17h3v3h-3zM18 17h3v3h-3z", GR),
  ortho: s("M3 2v20h19", GR, 1.300) + s("M3 15h8v7", GR, 1.300),
  polar: circ(11, 14, 8, "#e8eef5", 1.400) + s("M11 14h13M11 14L20 1", "#e8eef5", 1.300),
  iso: s("M12 0v24", "#57d07f", 1.100) + s("M3 3l17 19", "#d4525c", 1.100) + `<rect x="10" y="10" width="4" height="4" fill="#39404c" stroke="#e8e8e8" stroke-width="1.200"/>`,
  otrack: s("M3 21h19M3 21L20 3", "#e8eef5", 1.400) + f("M9 13h4v4H9z", "#f5f5f5"),
  osnap: s("M5 3h16v20H5", "#e8eef5", 1.400) + `<rect x="2" y="0" width="6" height="6" fill="#5d90c7" stroke="#e8eef5" stroke-width="1.400"/>` + s("M5 6v17", "#e8eef5", 1.400),
  anno1: f("M10 1l3 9 1 7 6 6-7-4-1 4-2-4-6 4 5-7z", "#f5f5f5") + circ(18, 6, 3, "#e8eef5", 1.200),
  anno2: f("M10 3l3 8 1 6 6 6-7-4-2 4-2-4-6 4 5-6z", GR) + f("M17 1l2 4h3l-3 7 0-4h-3z", GR),
  anno3: f("M12 1l3 10 1 6 6 6-7-4-3 4-3-4-7 4 6-6 1-6z", GR),
  gear: f("M10 0h4l1 3.500 3-1.500 3 3-1.500 3L24 10v4l-3.500 1 1.500 3-3 3-3-1.500L14 24h-4l-1-3.500L6 22l-3-3 1.500-3L0 14v-4l3.500-1L2 6l3-3 3 1.500z", LT) + circ(12, 12, 4, BG, 0, BG),
  plus: f("M11 1h2.500v10.500H24V14H13.500v10H11V14H1v-2.500h10z", LT),
  isolate: s("M3 1h7v9H3z", GR, 1.200) + circ(18, 12, 4.500, GR, 1.200) + s("M7 15l5 8H2z", GR, 1.200),
  fullscreen: s("M1 3h22v18H1z", GR, 1.200) + f("M3 5h18v14H3z", "#68707c") + f("M20 5v5l-2-2-3 3-1-1 3-3-2-2zM4 19v-5l2 2 3-3 1 1-3 3 2 2z", LT),
  hamburger: f("M1 3h22v3H1zM1 10.500h22v3H1zM1 18h22v3H1z", LT),
};

class CadApp extends HTMLElement {
  connectedCallback() {
    this.attachShadow({ mode: "open" }).innerHTML = `
<style>
  :host { display: flex; flex-direction: column; position: relative; box-sizing: border-box; width: 2560px; height: 1368px; overflow: hidden; padding: 2px 2px 0; background: #8db5d9; font-family: "Noto Sans", "Noto Sans CJK SC", sans-serif; }
  .middle { display: flex; height: 1067px; flex: none; }
  .work { width: 2469px; flex: none; display: flex; flex-direction: column; }
  .work-top { display: flex; height: 1043px; flex: none; }
  .vbar { width: 24px; flex: none; background: #efefef; }
  .vbar i { display: block; width: 9px; height: 24px; margin: 24px 0 0 8px; background: #8a8a8a; }
  .hbar { height: 24px; flex: none; background: #efefef; overflow: hidden; }
  .hbar i { display: block; width: 24px; height: 9px; margin: 8px 0 0 2397px; background: #8a8a8a; }
  .gap { height: 4px; flex: none; background: #3b4453; }
</style>
<slot name="title"></slot>
<slot name="tabs"></slot>
<slot name="ribbon"></slot>
<div class="middle">
  <slot name="left"></slot>
  <div class="work">
    <div class="work-top">
      <slot name="view"></slot>
      <div class="vbar"><i></i></div>
    </div>
    <div class="hbar"><i></i></div>
  </div>
  <slot name="right"></slot>
</div>
<div class="gap"></div>
<slot name="command"></slot>
<slot name="status"></slot>
<slot name="marks"></slot>`;
  }
}

class CadTitlebar extends HTMLElement {
  connectedCallback() {
    this.attachShadow({ mode: "open" }).innerHTML = `
<style>
  :host { display: flex; flex: none; height: 66px; box-sizing: border-box; background: #232a35; border-bottom: 1px solid #3d4553; padding-left: 4px; }
  .logo { width: 56px; height: 56px; margin-top: 4px; flex: none; box-sizing: border-box; border: 1px solid #0f1217; background: linear-gradient(#cfcfcf, #6d6d6d); }
  .logo svg { display: block; }
  .rows { flex: 1; display: flex; flex-direction: column; padding-left: 8px; }
  .top { display: flex; align-items: center; height: 36px; }
  .qat { display: flex; align-items: center; height: 36px; }
  .caption { margin-left: 864px; color: #f2f2f2; font-size: 17px; white-space: nowrap; display: flex; gap: 21px; }
  .caption span:first-child { word-spacing: 2.5px; }
  .win { margin-left: auto; display: flex; }
  .bottom { display: flex; align-items: center; height: 29px; margin-left: -6.6px; }
  .menu { display: flex; }
  .doc { margin-left: auto; display: flex; }
</style>
<div class="logo">
  <svg width="54" height="54" viewBox="0 0 54 54">
    <defs><linearGradient id="red" x1="0" y1="0" x2="0" y2="1"><stop offset="0" stop-color="#d63a3f"/><stop offset="1" stop-color="#b01c24"/></linearGradient></defs>
    <path d="M5 38C9 27 15 11 19 3h11l7 35h-9l-1.500-9H17l-5 9z" fill="url(#red)"/>
    <path d="M19 3h11l7 35h-9L24.500 9z" fill="#a51c24"/>
    <path d="M19.500 25h5.500l-1.500-12z" fill="#a9a9a9"/>
    <path d="M42 27h10l-5 6z" fill="#2b2b2b"/>
  </svg>
</div>
<div class="rows">
  <div class="top">
    <div class="qat"><slot name="qat"></slot></div>
    <div class="caption"><span>Autodesk AutoCAD 2020</span><span>Drawing1.dwg</span></div>
    <div class="win">
      <svg width="94" height="36" viewBox="0 0 94 36" style="margin-right:11px">
        <path d="M2 22h11v3H2z" fill="#e2e2e2"/>
        <path d="M34 11h16v16H34z" fill="none" stroke="#e2e2e2" stroke-width="1.500"/>
        <path d="M34 10h16v4H34z" fill="#e2e2e2"/>
        <path d="M70 10l14 14M84 10L70 24" stroke="#e2e2e2" stroke-width="3" fill="none"/>
      </svg>
    </div>
  </div>
  <div class="bottom">
    <div class="menu"><slot name="menu"></slot></div>
    <div class="doc">
      <svg width="64" height="24" viewBox="0 0 64 24" style="margin:-4px 7px 0 0">
        <path d="M0 18h11v3H0z" fill="#e2e2e2"/>
        <path d="M26 5h11v10M21 10h11v10H21z" fill="none" stroke="#e2e2e2" stroke-width="1.500"/>
        <path d="M26 4h11v3H26zM21 9h11v3H21z" fill="#e2e2e2"/>
        <path d="M48 6l13 13M61 6L48 19" stroke="#e2e2e2" stroke-width="3" fill="none"/>
      </svg>
    </div>
  </div>
</div>`;
  }
}

class CadMenuItem extends HTMLElement {
  connectedCallback() {
    this.attachShadow({ mode: "open" }).innerHTML = `
<style>:host { display: block; padding: 0 15.6px; color: #c9c9c9; font-size: 17px; white-space: nowrap; }</style><slot></slot>`;
  }
}

class CadTabbar extends HTMLElement {
  connectedCallback() {
    this.attachShadow({ mode: "open" }).innerHTML = `
<style>
  :host { display: flex; flex: none; height: 34px; background: #232a35; box-sizing: border-box; padding: 3px 0 0 26px; align-items: flex-end; }
  .doc { width: 186px; height: 31px; flex: none; display: flex; align-items: center; box-sizing: border-box; padding: 0 0 2px 24px; background: #3b4453; color: #e4e4e4; font-size: 17px;
    clip-path: path("M0 31C7 31 10 27 12 18C14 6 16 0 26 0H168C174 0 176 8 178 18C180 27 182 31 186 31Z"); }
  .doc svg { margin-left: 50px; }
  .add { width: 29px; height: 20px; margin: 0 0 4px 6px; flex: none; display: flex; align-items: center; justify-content: center; background: #3a4251;
    clip-path: path("M1 0H29V14C29 18 27 20 23 20H10C4 20 1 14 1 6Z"); }
</style>
<div class="doc">Drawing1
  <svg width="14" height="14" viewBox="0 0 14 14"><path d="M1 1l12 12M13 1L1 13" stroke="#b0b0b0" stroke-width="2.500"/></svg>
</div>
<div class="add"><svg width="12" height="12" viewBox="0 0 12 12"><path d="M6 0v12M0 6h12" stroke="#aab0ba" stroke-width="2.500"/></svg></div>`;
  }
}

class CadRibbon extends HTMLElement {
  connectedCallback() {
    this.attachShadow({ mode: "open" }).innerHTML = `
<style>:host { display: flex; flex-direction: column; flex: none; height: 77px; box-sizing: border-box; padding: 7px 0 0 4px; gap: 4px; background: #3b4453; }</style><slot></slot>`;
  }
}

class CadRow extends HTMLElement {
  connectedCallback() {
    this.attachShadow({ mode: "open" }).innerHTML = `
<style>:host { display: flex; height: 30px; flex: none; }
:host(:last-child) { height: 31px; }</style><slot></slot>`;
  }
}

class CadGroup extends HTMLElement {
  connectedCallback() {
    this.attachShadow({ mode: "open" }).innerHTML = `
<style>
  :host { display: flex; align-items: center; flex: none; box-sizing: border-box; background: #3b4453; border: 1px solid #252c38; }
  :host([vertical]) { flex-direction: column; align-items: center; }
  :host([plain]) { border: 0; height: 34px; }
</style><slot></slot>`;
  }
}

class CadIcon extends HTMLElement {
  connectedCallback() {
    const w = this.getAttribute("w") || 32;
    const rowH = this.getAttribute("h");
    if (rowH) this.style.height = rowH + "px";
    this.style.width = w + "px";
    this.attachShadow({ mode: "open" }).innerHTML = `
<style>
  :host { display: inline-flex; align-items: center; justify-content: center; flex: none; height: 100%; }
  :host([on]) { background: #5d90c7; }
  svg { display: block; overflow: visible; }
</style>
<svg width="24" height="24" viewBox="0 0 24 24">${ICONS[this.getAttribute("name")] || ""}</svg>`;
  }
}

class CadDropdown extends HTMLElement {
  connectedCallback() {
    this.style.width = (this.getAttribute("w") || 16) + "px";
    const color = this.getAttribute("color") || "#f0f0f0";
    this.attachShadow({ mode: "open" }).innerHTML = `
<style>:host { display: inline-flex; align-items: center; justify-content: center; flex: none; height: 100%; }</style>
<svg width="9" height="6" viewBox="0 0 9 6"><path d="M0 0h9L4.500 6z" fill="${color}"/></svg>`;
  }
}

class CadSep extends HTMLElement {
  connectedCallback() {
    this.attachShadow({ mode: "open" }).innerHTML = `
<style>
  :host { display: block; flex: none; width: 2px; height: calc(100% - 4px); margin: 0 2px; background: linear-gradient(90deg, #1f2630 50%, #5a6270 50%); }
  :host([flat]) { width: 28px; height: 2px; margin: 4px 0 2px; background: #dfdfdf; }
</style>`;
  }
}

class CadCombo extends HTMLElement {
  connectedCallback() {
    this.style.width = this.getAttribute("w") + "px";
    const pad = this.getAttribute("pad") || 6;
    this.attachShadow({ mode: "open" }).innerHTML = `
<style>
  :host { display: flex; align-items: center; flex: none; box-sizing: border-box; height: 100%; background: #fff; color: #000; font-size: 17px; white-space: nowrap; }
  :host([tall]) { height: 28px; }
  :host([off]) { background: #f0f0f0; color: #7b7b7b; }
  .body { display: flex; align-items: center; flex: 1; height: 100%; }
  svg { flex: none; margin-right: 7px; }
</style>
<div class="body" style="padding-left:${pad}px"><slot></slot></div>
<svg width="9" height="6" viewBox="0 0 9 6"><path d="M.500.500L4.500 5l4-4.500" fill="none" stroke="#555" stroke-width="1"/></svg>`;
  }
}

class CadSwatch extends HTMLElement {
  connectedCallback() {
    this.attachShadow({ mode: "open" }).innerHTML = `
<style>:host { display: block; flex: none; box-sizing: border-box; width: 18px; height: 22px; background: #fff; border: 1px solid #000; }</style>`;
  }
}

class CadRule extends HTMLElement {
  connectedCallback() {
    this.style.width = this.getAttribute("w") + "px";
    this.attachShadow({ mode: "open" }).innerHTML = `
<style>:host { display: block; flex: none; height: 1px; margin-right: 8px; background: #000; }</style>`;
  }
}

class CadSide extends HTMLElement {
  connectedCallback() {
    this.attachShadow({ mode: "open" }).innerHTML = `
<style>
  :host { display: flex; flex-direction: column; flex: none; box-sizing: border-box; background: #3b4453; }
  :host([side="left"]) { width: 42px; padding-left: 5px; }
  :host([side="right"]) { width: 45px; padding-left: 4px; }
</style><slot></slot>`;
  }
}

class CadViewport extends HTMLElement {
  connectedCallback() {
    const W = 2445, H = 1043;
    let minor = "", major = "";
    for (let k = -2; k < 110; k++) {
      const x = Math.round((1156 - 48 * 23.74) + k * 23.74);
      const y = Math.round((493.7 - 20 * 23.74) + k * 23.74);
      const isMajor = k % 5 === 0;
      if (x >= 0 && x < W) { isMajor ? (major += `M${x + 0.5} 0V${H}`) : (minor += `M${x + 0.5} 0V${H}`); }
      if (y >= 0 && y < H) { isMajor ? (major += `M0 ${y + 0.5}H${W}`) : (minor += `M0 ${y + 0.5}H${W}`); }
    }
    this.attachShadow({ mode: "open" }).innerHTML = `
<style>
  :host { display: block; position: relative; flex: none; width: ${W}px; height: ${H}px; overflow: hidden; background: #222932; color: #dcdcdc; font-size: 17px; letter-spacing: .3px; }
  svg { position: absolute; left: 0; top: 0; }
  .label { position: relative; padding: 4px 0 0 3px; white-space: nowrap; }
</style>
<svg width="${W}" height="${H}" shape-rendering="crispEdges">
  <path d="${minor}" stroke="#272e38" stroke-width="1" fill="none"/>
  <path d="${major}" stroke="#313948" stroke-width="1" fill="none"/>
  <path d="M0 294.500H381M404 294.500H${W}M392.500 0V283M392.500 306V${H}" stroke="#e6e6e6" stroke-width="1" fill="none"/>
  <rect x="381.500" y="283.500" width="22" height="22" fill="none" stroke="#ececec" stroke-width="1.500"/>
</svg>
<div class="label"><slot></slot></div>`;
  }
}

class CadCommand extends HTMLElement {
  connectedCallback() {
    this.attachShadow({ mode: "open" }).innerHTML = `
<style>
  :host { display: flex; flex: none; height: 80px; box-sizing: border-box; padding: 0 6px 2px 4px; background: #3b4453; }
  .tools { width: 35px; flex: none; display: flex; flex-direction: column; align-items: center; }
  .tools svg { display: block; flex: none; }
  .main { flex: 1; display: flex; flex-direction: column; }
  .history { height: 49px; box-sizing: border-box; background: #c6c6c6; display: flex; flex-direction: column; justify-content: center; padding: 1px 0 0 3px; color: #000; font-size: 17px; letter-spacing: 2px; line-height: 22px; border-bottom: 1px solid #20262f; }
  ::slotted([slot="history"]) { display: block; height: 22px; }
  .input { height: 29px; display: flex; align-items: center; background: #fff; color: #6b6b6b; font-size: 18px; font-style: italic; padding-left: 6px; }
  .input svg { flex: none; }
</style>
<div class="tools">
  <svg width="26" height="8" viewBox="0 0 26 8" style="margin-top:7px"><path d="M1 0h2v2H1zM5 0h2v2H5zM9 0h2v2H9zM13 0h2v2h-2zM17 0h2v2h-2zM21 0h2v2h-2zM1 5h2v2H1zM5 5h2v2H5zM9 5h2v2H9zM13 5h2v2h-2zM17 5h2v2h-2zM21 5h2v2h-2z" fill="#e8e8e8"/></svg>
  <svg width="14" height="14" viewBox="0 0 14 14" style="margin-top:7px"><path d="M1 1l12 12M13 1L1 13" stroke="#f0f0f0" stroke-width="3"/></svg>
  <svg width="22" height="22" viewBox="0 0 22 22" style="margin-top:14px"><path d="M2 20c-1-1-1-2 0-3l9-9c-1-3 0-5 2-6 2-1 4-1 5-1l-4 4 1 3 3 1 4-4c0 2 0 4-1 5-2 2-4 3-6 2l-9 9c-1 1-2 0-4-1z" fill="#f0f0f0"/></svg>
</div>
<div class="main">
  <div class="history"><slot name="history"></slot></div>
  <div class="input">
    <svg width="21" height="17" viewBox="0 0 21 17"><path d="M.500.500h20v16H.500z" fill="#f4f4f4" stroke="#777"/><path d="M0 0h21v4H0z" fill="#555"/><path d="M4 7l3 2.500L4 12M8 13h4" fill="none" stroke="#555"/></svg>
    <svg width="11" height="7" viewBox="0 0 11 7" style="margin:0 9px 0 3px"><path d="M0 0h11L5.500 7z" fill="#555"/></svg>
    <slot name="prompt"></slot>
  </div>
</div>`;
  }
}

class CadLayoutTab extends HTMLElement {
  connectedCallback() {
    this.attachShadow({ mode: "open" }).innerHTML = `
<style>
  :host { display: flex; align-items: center; justify-content: center; flex: none; box-sizing: border-box; width: 77px; height: 25px; margin-right: -1px; background: #2e3644; color: #b9bec6; font-size: 17px; padding-bottom: 2px;
    clip-path: path("M0 0H77C73 4 73 16 69 22C67 25 65 25 63 25H12C8 25 6 22 5 16C4 8 3 3 0 0Z"); }
  :host([active]) { width: 68px; background: #3b4453; color: #fff; font-weight: 700; clip-path: path("M0 0H68C64 4 62 16 58 22C56 25 54 25 52 25H14C10 25 8 22 7 16C6 8 4 3 0 0Z"); }
</style><slot></slot>`;
  }
}

class CadStatusbar extends HTMLElement {
  connectedCallback() {
    this.attachShadow({ mode: "open" }).innerHTML = `
<style>
  :host { display: flex; flex: none; height: 38px; box-sizing: border-box; padding: 0 7px 0 18px; background: #232a35; }
  .tabs { display: flex; }
  .add { width: 27px; height: 21px; margin: 2px 0 0 9px; display: flex; align-items: center; justify-content: center; background: #3a4251;
    clip-path: path("M6 0H27C25 6 24 12 22 17C21 20 19 21 16 21H0C3 14 3 5 6 0Z"); }
  .tools { margin-left: auto; display: flex; padding-top: 2px; }
</style>
<div class="tabs"><slot name="tabs"></slot></div>
<div class="add"><svg width="11" height="11" viewBox="0 0 11 11"><path d="M5.500 0v11M0 5.500h11" stroke="#aab0ba" stroke-width="2.500"/></svg></div>
<div class="tools"><slot name="tools"></slot></div>`;
  }
}

class CadLabel extends HTMLElement {
  connectedCallback() {
    this.attachShadow({ mode: "open" }).innerHTML = `
<style>
  :host { display: block; flex: none; color: #fff; font-size: 17px; white-space: nowrap; }
  :host([bold]) { font-weight: 700; }
</style><slot></slot>`;
  }
}

class CadWatermark extends HTMLElement {
  connectedCallback() {
    this.attachShadow({ mode: "open" }).innerHTML = `
<style>:host { display: block; position: absolute; font-size: 50px; line-height: 60px; white-space: nowrap; pointer-events: none; font-family: "Noto Sans CJK SC", sans-serif; }</style><slot></slot>`;
  }
}

customElements.define("cad-icon", CadIcon);
customElements.define("cad-dd", CadDropdown);
customElements.define("cad-sep", CadSep);
customElements.define("cad-group", CadGroup);
customElements.define("cad-row", CadRow);
customElements.define("cad-combo", CadCombo);
customElements.define("cad-swatch", CadSwatch);
customElements.define("cad-rule", CadRule);
customElements.define("cad-menu-item", CadMenuItem);
customElements.define("cad-titlebar", CadTitlebar);
customElements.define("cad-tabbar", CadTabbar);
customElements.define("cad-ribbon", CadRibbon);
customElements.define("cad-side", CadSide);
customElements.define("cad-viewport", CadViewport);
customElements.define("cad-command", CadCommand);
customElements.define("cad-layout-tab", CadLayoutTab);
customElements.define("cad-label", CadLabel);
customElements.define("cad-statusbar", CadStatusbar);
customElements.define("cad-watermark", CadWatermark);
customElements.define("cad-app", CadApp);
</script>
</body>
</html>
